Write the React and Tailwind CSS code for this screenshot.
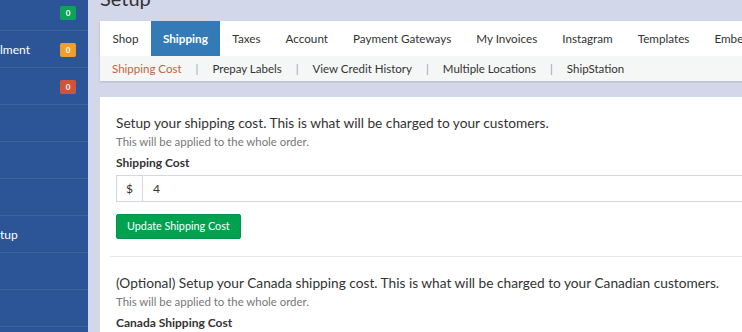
export default function App() {
  const tabs = ["Shop", "Shipping", "Taxes", "Account", "Payment Gateways", "My Invoices", "Instagram", "Templates", "Embed"];
  const subs = ["Shipping Cost", "Prepay Labels", "View Credit History", "Multiple Locations", "ShipStation"];
  const rows = [
    { label: "", badge: "bg-[#0ea356]" },
    { label: "lment", badge: "bg-[#f0a02a]" },
    { label: "", badge: "bg-[#d1543a]" },
    { label: "" },
    { label: "" },
    { label: "" },
    { label: "tup" },
    { label: "" },
    { label: "" },
    { label: "" },
  ];
  return (
    <div className="w-[742px] h-[332px] overflow-hidden flex bg-[#d3d7ea]" style={{ fontFamily: "Lato, 'Open Sans', sans-serif" }}>
      <div className="w-[88px] shrink-0 bg-[#2c5597] flex flex-col -mt-[6px]">
        {rows.map((r, i) => (
          <div key={i} className="h-[37px] shrink-0 border-b border-[#3b63a2] flex items-center justify-between pr-[12px] text-white text-[12px]">
            <span className="mt-[1px]">{r.label}</span>
            {r.badge && (
              <span className={`${r.badge} mt-[2px] w-[16px] h-[14px] rounded-[2px] text-[8px] font-bold flex items-center justify-center`}>0</span>
            )}
          </div>
        ))}
      </div>
      <div className="flex-1 min-w-0 pl-[12px] flex flex-col">
        <div className="h-[21px] relative overflow-hidden">
          <div className="absolute left-0 -top-[14px] text-[20px] leading-[24px] text-[#333]">Setup</div>
        </div>
        <div className="bg-white shadow-[0_1px_2px_rgba(0,0,0,0.15)] w-[700px]">
          <div className="flex h-[35px] text-[11.7px] text-[#333] whitespace-nowrap">
            {tabs.map((t) => (
              <div key={t} className={t === "Shipping" ? "bg-[#337ab7] text-white font-bold px-[12px] flex items-center" : "px-[12.5px] flex items-center"}>{t}</div>
            ))}
          </div>
          <div className="flex items-center h-[25px] bg-[#f5f7f7] px-[12px] text-[11.5px] text-[#333] whitespace-nowrap">
            {subs.map((s, i) => (
              <span key={s} className="flex items-center">
                {i > 0 && <span className="text-[#9aa0b0] mx-[14px]">|</span>}
                <span className={i === 0 ? "text-[#c8623a]" : ""}>{s}</span>
              </span>
            ))}
          </div>
        </div>
        <div className="mt-[16px] bg-white w-[700px] flex-1 px-[16px] pt-[16px]">
          <div className="text-[13.7px] text-[#333] leading-[20px]">Setup your shipping cost. This is what will be charged to your customers.</div>
          <div className="text-[11.4px] text-[#777] leading-[16px] mt-[1px]">This will be applied to the whole order.</div>
          <div className="text-[12px] text-[#333] font-bold mt-[5px] leading-[16px]">Shipping Cost</div>
          <div className="mt-[4px] flex h-[27px] border border-[#d3d7e3] text-[12px] text-[#333]">
            <div className="w-[26px] border-r border-[#d3d7e3] flex items-center justify-center">$</div>
            <div className="flex-1 flex items-center pl-[10px]">4</div>
          </div>
          <button className="block mt-[12px] h-[25px] px-[10px] bg-[#00a250] text-white text-[10.8px] rounded-[2px] border border-[#009548]">Update Shipping Cost</button>
          <div className="mt-[17px] -ml-[6px] border-t border-[#e6e8ee]"></div>
          <div className="mt-[16px] text-[13.7px] text-[#333] leading-[20px] whitespace-nowrap">(Optional) Setup your Canada shipping cost. This is what will be charged to your Canadian customers.</div>
          <div className="text-[11.4px] text-[#777] leading-[16px] mt-[1px]">This will be applied to the whole order.</div>
          <div className="text-[12px] text-[#333] font-bold mt-[5px] leading-[16px]">Canada Shipping Cost</div>
        </div>
      </div>
    </div>
  );
}
